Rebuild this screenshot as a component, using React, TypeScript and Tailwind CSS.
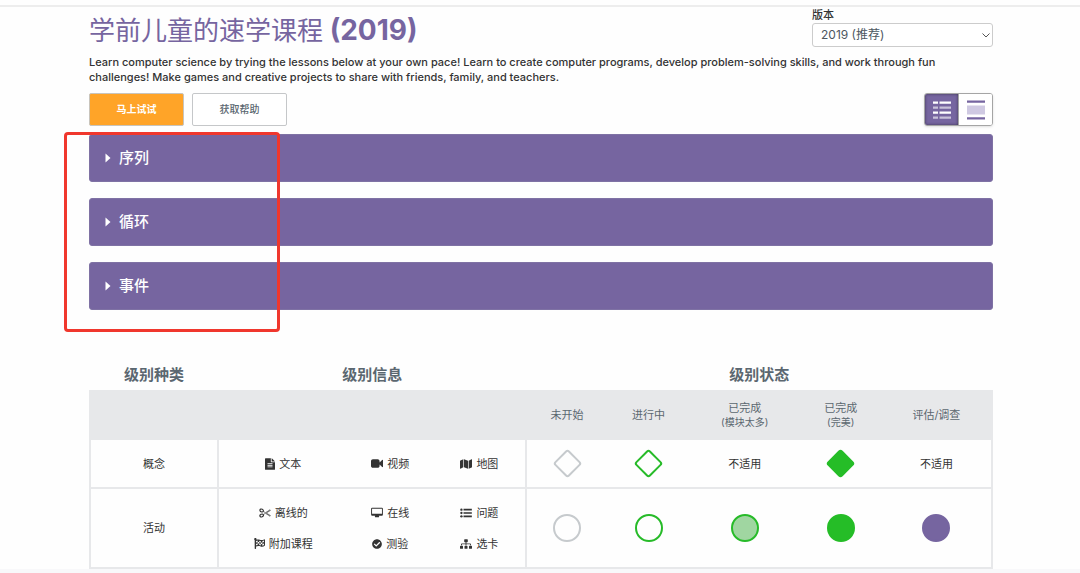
import React from 'react';
import { FaMap, FaFlagCheckered, FaCheckCircle, FaSitemap } from 'react-icons/fa';

const lessonGroups = ['序列', '循环', '事件'];

const FileTextIcon = () => (
    <svg viewBox="0 0 12 14" className="h-[12px] w-[10px]" fill="currentColor" aria-hidden="true">
        <path
            fillRule="evenodd"
            d="M1 0h6v4.2c0 .5.3.8.8.8H12v8.2c0 .5-.3.8-.8.8H.8c-.5 0-.8-.3-.8-.8V.8C0 .3.3 0 .8 0zM8 .1c.2.1.3.2.5.3l3 3c.2.2.3.4.4.6H8zM3 6v1h6V6zm0 2v1h6V8zm0 2v1h6v-1z"
        />
    </svg>
);

const VideoIcon = () => (
    <svg viewBox="0 0 14 12" className="h-[11px] w-[12px]" fill="currentColor" aria-hidden="true">
        <path d="M2.2 1h5.6C9 1 10 2 10 3.2v1.6l3-3c.4-.4 1-.1 1 .4v7.6c0 .5-.6.8-1 .4l-3-3v1.6C10 10 9 11 7.8 11H2.2C1 11 0 10 0 8.8V3.2C0 2 1 1 2.2 1z" />
    </svg>
);

const ScissorsIcon = () => (
    <svg viewBox="0 0 14 12" className="h-[10px] w-[12px]" fill="none" stroke="currentColor" aria-hidden="true">
        <ellipse cx="3" cy="3" rx="2.2" ry="1.6" strokeWidth="1.4" transform="rotate(24 3 3)" />
        <ellipse cx="3" cy="9" rx="2.2" ry="1.6" strokeWidth="1.4" transform="rotate(-24 3 9)" />
        <path d="M5 4l2.5 1.7L13 2.2l.6.6L8.6 6l5 3.2-.6.6-5.5-3.5L5 8" strokeWidth=".8" />
    </svg>
);

const DesktopIcon = () => (
    <svg viewBox="0 0 15 14" className="h-[11px] w-[12px]" fill="currentColor" aria-hidden="true">
        <path
            fillRule="evenodd"
            d="M1.2 1h12.6c.7 0 1.2.5 1.2 1.2v7.6c0 .7-.5 1.2-1.2 1.2H9.8c0 .5.5 1 .5 1.5 0 .3-.2.5-.5.5H5.2c-.3 0-.5-.2-.5-.5 0-.5.5-1 .5-1.5h-4C.5 11 0 10.5 0 9.8V2.2C0 1.5.5 1 1.2 1zm0 1.2v6.3h12.6V2.2z"
        />
    </svg>
);

const ListIcon = () => (
    <svg viewBox="0 0 14 12" className="h-[10px] w-[12px]" fill="currentColor" aria-hidden="true">
        <circle cx="1.5" cy="2" r="1.4" />
        <circle cx="1.5" cy="6" r="1.4" />
        <circle cx="1.5" cy="10" r="1.4" />
        <path d="M4 1h10v2H4zM4 5h10v2H4zM4 9h10v2H4z" />
    </svg>
);

const LevelInfo: React.FC<{ icon: React.ReactNode; label: string }> = ({ icon, label }) => (
    <span className="flex items-center justify-center gap-1">
        {icon}
        {label}
    </span>
);

const Circle: React.FC<{ className: string }> = ({ className }) => (
    <span className={`mx-auto block size-7 rounded-full border-2 ${className}`} />
);

const Diamond: React.FC<{ className: string }> = ({ className }) => (
    <span className={`mx-auto block size-[21px] rotate-45 rounded-[3px] border-2 ${className}`} />
);

const CourseHeader = () => (
    <header className="flex items-start justify-between">
        <h1 className="pt-[5px] text-[28px] leading-9 font-bold text-[#7665a0]">
            <span className="text-[26px] font-normal">学前儿童的速学课程</span> (2019)
        </h1>
        <div className="w-[181px] text-[#4d575f]">
            <label htmlFor="version" className="block text-[11px] leading-4 font-medium text-[#333]">
                版本
            </label>
            <div className="relative">
                <select
                    id="version"
                    className="block h-6 w-full appearance-none rounded-[3px] border border-[#ccc] bg-white pl-2 text-[12px]"
                >
                    <option>2019 (推荐)</option>
                </select>
                <svg
                    viewBox="0 0 8 5"
                    className="pointer-events-none absolute top-[10px] right-[3px] h-[5px] w-2"
                    fill="none"
                    stroke="#555"
                    aria-hidden="true"
                >
                    <path d="M.5.5L4 4 7.5.5" />
                </svg>
            </div>
        </div>
    </header>
);

const Toolbar = () => (
    <div className="mt-2 flex items-center justify-between">
        <div className="flex gap-2">
            <button
                type="button"
                className="h-[33px] w-[95px] rounded-[2px] border border-[#c8c4bc] bg-[#ffa428] text-[10px] font-bold text-white"
            >
                马上试试
            </button>
            <button
                type="button"
                className="h-[33px] w-[95px] rounded-[2px] border border-[#c5c7c9] bg-white text-[10px] font-medium text-[#5b6770]"
            >
                获取帮助
            </button>
        </div>
        <div className="flex h-[33px] w-[69px] overflow-hidden rounded-[3px] border border-[#a5a5a5] shadow-sm">
            <button
                type="button"
                aria-label="摘要视图"
                className="flex flex-1 items-center justify-center bg-[#7665a0] shadow-[inset_0_0_3px_rgba(0,0,0,0.5)]"
            >
                <svg viewBox="0 0 18 18" className="size-[18px]" fill="#fff" aria-hidden="true">
                    <path d="M0 .5h5v2.3H0zM6.5.5H18v2.3H6.5zM0 10.5h5v2.3H0zM6.5 10.5H18v2.3H6.5z" />
                    <path d="M0 5.5h5v2.3H0zM6.5 5.5H18v2.3H6.5zM0 15.5h5v2.3H0zM6.5 15.5H18v2.3H6.5z" opacity=".6" />
                </svg>
            </button>
            <button
                type="button"
                aria-label="详细视图"
                className="flex flex-1 items-center justify-center border-l border-[#a5a5a5] bg-white"
            >
                <svg viewBox="0 0 18 20" className="h-5 w-[18px]" fill="#7665a0" aria-hidden="true">
                    <path d="M0 .5h18v2.2H0zM0 17.2h18v2.2H0z" />
                    <path d="M0 5.5h18v9H0z" fill="#cfc9e2" />
                </svg>
            </button>
        </div>
    </div>
);

const LessonGroups = () => (
    <section className="relative mt-2 flex flex-col gap-4">
        {lessonGroups.map((name) => (
            <button
                key={name}
                type="button"
                className="flex h-12 w-full items-center rounded-[3px] border border-[#7f72a4] bg-[#7665a0] pl-[15px] text-[15px] font-medium text-white"
            >
                <svg viewBox="0 0 6 10" className="mr-2 h-[10px] w-[6px]" fill="currentColor" aria-hidden="true">
                    <path d="M.5.5l5 4.5-5 4.5z" />
                </svg>
                {name}
            </button>
        ))}
        {/* highlight frame over the lesson names */}
        <div className="pointer-events-none absolute -top-[2px] -left-[25px] h-[200px] w-[216px] rounded-[4px] border-[3px] border-[#f0372d]" />
    </section>
);

const LevelLegend = () => (
    <table className="mt-[49px] w-full table-fixed border-collapse text-center text-[11px] leading-4 font-medium text-[#333]">
        <colgroup>
            <col className="w-[128px]" />
            <col className="w-[129px]" />
            <col className="w-[86px]" />
            <col className="w-[93px]" />
            <col className="w-[81px]" />
            <col className="w-[82px]" />
            <col className="w-[110px]" />
            <col className="w-[82px]" />
            <col className="w-[110px]" />
        </colgroup>
        <thead className="text-[#5b6770]">
            <tr className="h-8 text-[15px]">
                <th className="font-bold">级别种类</th>
                <th colSpan={3} className="font-bold">级别信息</th>
                <th colSpan={5} className="font-bold">级别状态</th>
            </tr>
            <tr className="h-12 border-2 border-[#e7e8ea] bg-[#e7e8ea]">
                <td />
                <td colSpan={3} />
                <th className="font-normal">未开始</th>
                <th className="font-normal">进行中</th>
                <th className="leading-[14px] font-normal">
                    已完成
                    <span className="block text-[10px]">(模块太多)</span>
                </th>
                <th className="leading-[14px] font-normal">
                    已完成
                    <span className="block text-[10px]">(完美)</span>
                </th>
                <th className="font-normal">评估/调查</th>
            </tr>
        </thead>
        <tbody className="border-2 border-[#e7e8ea] font-normal">
            <tr className="h-[49px] border-b-2 border-[#e7e8ea]">
                <td className="border-r-2 border-[#e7e8ea]">概念</td>
                <td><LevelInfo icon={<FileTextIcon />} label="文本" /></td>
                <td><LevelInfo icon={<VideoIcon />} label="视频" /></td>
                <td className="border-r-2 border-[#e7e8ea]">
                    <LevelInfo icon={<FaMap className="size-3" />} label="地图" />
                </td>
                <td><Diamond className="border-[#c6cacd]" /></td>
                <td><Diamond className="border-[#27bb29]" /></td>
                <td>不适用</td>
                <td><Diamond className="border-[#25bd27] bg-[#25bd27]" /></td>
                <td>不适用</td>
            </tr>
            <tr className="h-10">
                <td rowSpan={2} className="border-r-2 border-[#e7e8ea]">活动</td>
                <td className="pt-2"><LevelInfo icon={<ScissorsIcon />} label="离线的" /></td>
                <td className="pt-2"><LevelInfo icon={<DesktopIcon />} label="在线" /></td>
                <td className="border-r-2 border-[#e7e8ea] pt-2"><LevelInfo icon={<ListIcon />} label="问题" /></td>
                <td rowSpan={2}><Circle className="border-[#c6cacd]" /></td>
                <td rowSpan={2}><Circle className="border-[#27bb29]" /></td>
                <td rowSpan={2}><Circle className="border-[#27bb29] bg-[#a0d6a1]" /></td>
                <td rowSpan={2}><Circle className="border-[#25bd27] bg-[#25bd27]" /></td>
                <td rowSpan={2}><Circle className="border-[#7665a0] bg-[#7665a0]" /></td>
            </tr>
            <tr className="h-10">
                <td className="pb-2">
                    <LevelInfo icon={<FaFlagCheckered className="size-[11px]" />} label="附加课程" />
                </td>
                <td className="pb-2">
                    <LevelInfo icon={<FaCheckCircle className="size-[10px]" />} label="测验" />
                </td>
                <td className="border-r-2 border-[#e7e8ea] pb-2">
                    <LevelInfo icon={<FaSitemap className="size-3" />} label="选卡" />
                </td>
            </tr>
        </tbody>
    </table>
);

export default function App() {
    return (
        <div className="bg-[#fefefe] pt-[5px] font-['Inter','Noto_Sans_CJK_SC',sans-serif]">
            <main className="border-t-2 border-[#ededed] bg-[#fefefe] pr-[87px] pl-[89px]">
                <CourseHeader />
                <p className="mt-[6px] pr-8 text-[11px] leading-[15px] font-medium text-[#333]">
                    Learn computer science by trying the lessons below at your own pace! Learn to create computer
                    programs, develop problem-solving skills, and work through fun challenges! Make games and creative
                    projects to share with friends, family, and teachers.
                </p>
                <Toolbar />
                <LessonGroups />
                <LevelLegend />
            </main>
            <div className="h-[5px] bg-[#f8f8fa]" />
        </div>
    );
}
